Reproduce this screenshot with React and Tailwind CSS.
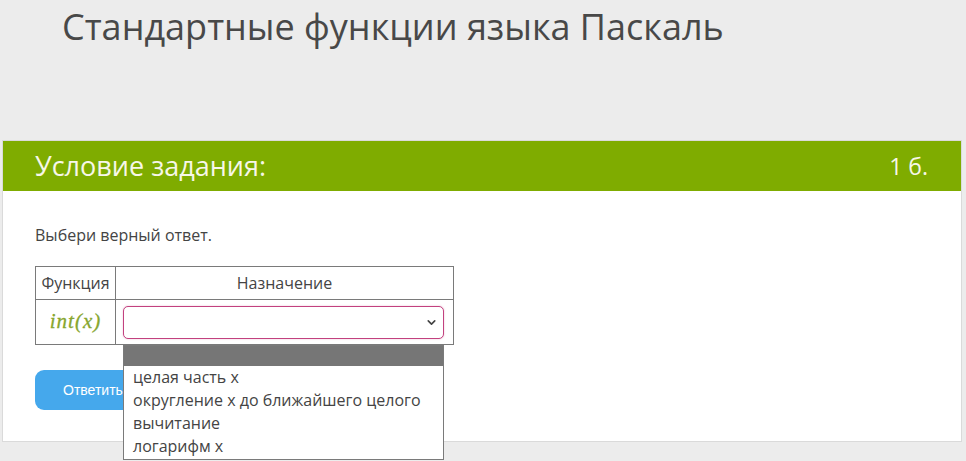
import { ChevronDown } from "lucide-react";

const OPTIONS = [
  "целая часть x",
  "округление x до ближайшего целого",
  "вычитание",
  "логарифм x",
];

function AnswerSelect() {
  return (
    <div className="relative">
      <div className="h-[33px] rounded-[5px] border border-[#c2417f] bg-white shadow-[0_0_2px_rgba(194,65,127,0.35)] flex items-center justify-end pr-[5px]">
        <ChevronDown size={13} strokeWidth={3} className="text-[#444]" />
      </div>
      {/* открытый список */}
      <div className="absolute left-0 top-[39px] w-full bg-white border border-[#7a7a7a] z-10">
        <div className="h-[20px] bg-[#767676]" />
        <ul className="pt-[0px] pb-[1px] text-[16px] leading-[23px] text-[#444]">
          {OPTIONS.map((o) => (
            <li key={o} className="pl-[9px]">{o}</li>
          ))}
        </ul>
      </div>
    </div>
  );
}

export default function App() {
  return (
    <div className="min-h-[461px] bg-[#ececec] font-['Open_Sans',sans-serif] text-[#444]">
      <h1 className="pl-[62px] pt-[3px] text-[36px] leading-[48px] text-[#484848]">
        Стандартные функции языка Паскаль
      </h1>
      <div className="h-[89px]" />
      <section className="ml-[2px] w-[960px] bg-white border border-[#dadada]">
        <header className="h-[50px] bg-[#7fac00] flex items-center justify-between pl-[32px] pr-[33px] text-[#f7f7e8]">
          <span className="text-[27px]">Условие задания:</span>
          <span className="text-[23px]">1 б.</span>
        </header>
        <div className="pl-[32px] pt-[33px] pb-[31px]">
          <p className="text-[16px] leading-[22px]">Выбери верный ответ.</p>
          <table className="mt-[20px] border-collapse text-[16px]">
            <tbody>
              <tr className="h-[33px]">
                <td className="border border-[#7a7a7a] w-[80px] text-center">Функция</td>
                <td className="border border-[#7a7a7a] w-[338px] text-center">Назначение</td>
              </tr>
              <tr className="h-[45px]">
                <td className="border border-[#7a7a7a] text-center font-['Liberation_Serif',serif] italic text-[21px] tracking-[1px] text-[#87a62e] [-webkit-text-stroke:0.3px_#87a62e]">
                  int(x)
                </td>
                <td className="border border-[#7a7a7a] pl-[7px] pr-[9px]">
                  <AnswerSelect />
                </td>
              </tr>
            </tbody>
          </table>
          <button className="mt-[25px] h-[40px] w-[130px] rounded-[9px] bg-[#45a8ec] text-white text-[14px] font-['Liberation_Sans',sans-serif] text-left pl-[28px]">
            Ответить
          </button>
        </div>
      </section>
    </div>
  );
}
